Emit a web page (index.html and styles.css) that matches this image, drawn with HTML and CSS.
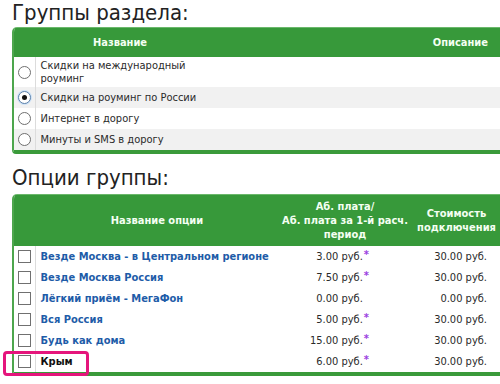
FILE: index.html
```html
<!DOCTYPE html>
<html lang="ru">
<head>
<meta charset="utf-8">
<title>Группы раздела</title>
<link rel="stylesheet" href="styles.css">
</head>
<body>
<div class="page">
  <h2 class="title">Группы раздела:</h2>
  <div class="frame">
    <table class="grid groups">
      <colgroup><col class="c-sel"><col class="c-gname"><col></colgroup>
      <thead>
        <tr><th></th><th>Название</th><th class="desc-h">Описание</th></tr>
      </thead>
      <tbody>
        <tr><td class="sel"><span class="radio"></span></td><td class="gname">Скидки на международный роуминг</td><td></td></tr>
        <tr class="alt"><td class="sel"><span class="radio on"></span></td><td class="gname">Скидки на роуминг по России</td><td></td></tr>
        <tr><td class="sel"><span class="radio"></span></td><td class="gname">Интернет в дорогу</td><td></td></tr>
        <tr class="alt"><td class="sel"><span class="radio"></span></td><td class="gname">Минуты и SMS в дорогу</td><td></td></tr>
      </tbody>
    </table>
  </div>

  <h2 class="title title2">Опции группы:</h2>
  <div class="frame">
    <table class="grid options">
      <colgroup><col class="c-sel"><col class="c-oname"><col class="c-price"><col></colgroup>
      <thead>
        <tr><th></th><th>Название опции</th><th>Аб. плата/<br>Аб. плата за 1-й расч.<br>период</th><th class="cost-h">Стоимость<br>подключения</th></tr>
      </thead>
      <tbody>
        <tr><td class="sel"><span class="check"></span></td><td><a class="opt" href="#">Везде Москва - в Центральном регионе</a></td><td class="price">3.00 руб.<span class="star">*</span></td><td class="cost">30.00 руб.</td></tr>
        <tr><td class="sel"><span class="check"></span></td><td><a class="opt" href="#">Везде Москва Россия</a></td><td class="price">7.50 руб.<span class="star">*</span></td><td class="cost">30.00 руб.</td></tr>
        <tr><td class="sel"><span class="check"></span></td><td><a class="opt" href="#">Лёгкий приём - МегаФон</a></td><td class="price">0.00 руб.<span class="star blank">*</span></td><td class="cost">0.00 руб.</td></tr>
        <tr><td class="sel"><span class="check"></span></td><td><a class="opt" href="#">Вся Россия</a></td><td class="price">5.00 руб.<span class="star">*</span></td><td class="cost">30.00 руб.</td></tr>
        <tr><td class="sel"><span class="check"></span></td><td><a class="opt" href="#">Будь как дома</a></td><td class="price">15.00 руб.<span class="star">*</span></td><td class="cost">30.00 руб.</td></tr>
        <tr><td class="sel"><span class="check"></span></td><td><span class="plain">Крым</span></td><td class="price">6.00 руб.<span class="star">*</span></td><td class="cost">30.00 руб.</td></tr>
      </tbody>
    </table>
  </div>
  <div class="mark"></div>
</div>
</body>
</html>
```

FILE: styles.css
```css
html, body {
  margin: 0;
  padding: 0;
  overflow: hidden;
  background: #fff;
}
body {
  font-family: "DejaVu Sans Condensed", "DejaVu Sans", sans-serif;
  color: #2a2a2a;
}
.page {
  position: relative;
  width: 500px;
  height: 384px;
  overflow: hidden;
  padding-left: 12px;
  box-sizing: border-box;
}
.title {
  margin: 0;
  height: 27px;
  font-size: 22px;
  font-weight: normal;
  line-height: 26px;
  color: #222;
}
.title2 {
  margin-top: 8px;
  height: 32px;
  line-height: 32px;
}
.frame {
  width: 488px;
  border-left: 2px solid #4da64d;
  border-bottom: 4px solid #3a9a3a;
  border-radius: 5px 0 0 4px;
  overflow: hidden;
}
.grid {
  width: 100%;
  border-collapse: collapse;
  table-layout: fixed;
  font-size: 11px;
}
.grid th {
  background: #37993a;
  color: #f4fff2;
  font-weight: bold;
  text-align: center;
  border-top: 1px solid #6bb86b;
}
.groups th { height: 29px; padding: 0 5px; }
.options th { height: 51px; padding: 0 2px; line-height: 14px; }
.options th.cost-h { padding: 0; }
.c-sel { width: 21px; }
.c-gname { width: 170px; }
.c-oname { width: 244px; }
.c-price { width: 132px; }
.groups th.desc-h { text-align: right; padding-right: 14px; }
.grid td {
  padding: 0 5px;
  line-height: 13px;
  vertical-align: middle;
}
.groups td { height: 21px; padding-top: 2px; padding-bottom: 2px; box-sizing: border-box; }
.options td { height: 21px; box-sizing: border-box; }
.groups tr.alt td { background: #f1f1f1; }
.grid td.sel {
  padding: 0;
  text-align: center;
  border-right: 1px solid #dcdcdc;
}
.radio, .check {
  display: inline-block;
  box-sizing: border-box;
  width: 13px;
  height: 13px;
  vertical-align: middle;
  background: #fff;
}
.radio {
  border-radius: 50%;
  border: 1px solid #6f6f6f;
  position: relative;
}
.radio.on {
  border-color: #5b7fa8;
  box-shadow: 0 0 0 1px #cfe3f7;
}
.radio.on::after {
  content: "";
  position: absolute;
  left: 3px;
  top: 3px;
  width: 5px;
  height: 5px;
  border-radius: 50%;
  background: #111;
}
.check {
  border: 1px solid #707070;
}
.opt {
  color: #1e5ca8;
  font-weight: bold;
  text-decoration: none;
}
.plain {
  color: #111;
  font-weight: bold;
}
.grid td.price {
  text-align: right;
  padding-right: 42px;
}
.grid td.cost {
  text-align: right;
  padding-right: 15px;
}
.star {
  color: #9a3fe0;
  font-weight: bold;
  position: relative;
  top: -2px;
  margin-left: 1px;
}
.star.blank { visibility: hidden; }
.mark {
  position: absolute;
  left: 3px;
  top: 351px;
  width: 86px;
  height: 25px;
  box-sizing: border-box;
  border: 3px solid #e5157c;
  border-radius: 4px;
}
```
